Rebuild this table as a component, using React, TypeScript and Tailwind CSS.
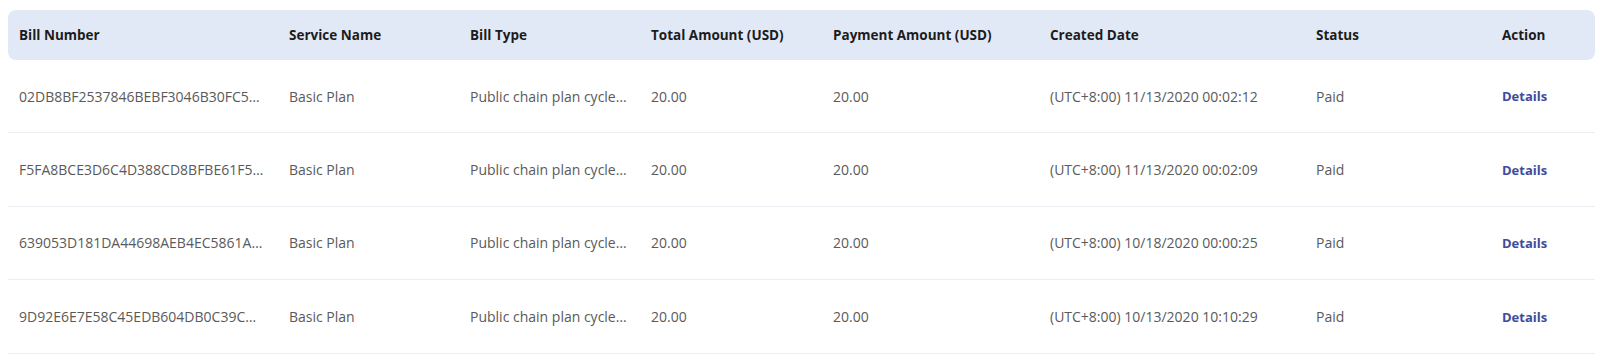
const rows = [
  {
    bill: "02DB8BF2537846BEBF3046B30FC5A9D1",
    date: "(UTC+8:00) 11/13/2020 00:02:12",
  },
  {
    bill: "F5FA8BCE3D6C4D388CD8BFBE61F5A7C2",
    date: "(UTC+8:00) 11/13/2020 00:02:09",
  },
  {
    bill: "639053D181DA44698AEB4EC5861A3F08",
    date: "(UTC+8:00) 10/18/2020 00:00:25",
  },
  {
    bill: "9D92E6E7E58C45EDB604DB0C39CD1E7A",
    date: "(UTC+8:00) 10/13/2020 10:10:29",
  },
];

const cols =
  "grid grid-cols-[270px_181px_181px_182px_217px_266px_186px_1fr] items-center";

const App = () => {
  return (
    <div className="w-full min-h-[359px] bg-white pt-[10px] px-[8px] font-['Open_Sans',sans-serif]">
      {/* Header */}
      <div className={`${cols} h-[50px] bg-[#e2e9f6] rounded-[8px] text-[13.5px] font-bold text-[#1c1c1c]`}>
        {[
          "Bill Number",
          "Service Name",
          "Bill Type",
          "Total Amount (USD)",
          "Payment Amount (USD)",
          "Created Date",
          "Status",
          "Action",
        ].map((h) => (
          <div key={h} className="pl-[11px] whitespace-nowrap">
            {h}
          </div>
        ))}
      </div>

      {/* Rows */}
      {rows.map((r) => (
        <div
          key={r.bill}
          className={`${cols} h-[73.4px] border-b border-[#eceef4] text-[14px] text-[#5a5a5a]`}
        >
          <div className="pl-[11px] pr-[12px] truncate">{r.bill}</div>
          <div className="pl-[11px] truncate">Basic Plan</div>
          <div className="pl-[11px] pr-[10px] truncate">Public chain plan cycle billing</div>
          <div className="pl-[11px]">20.00</div>
          <div className="pl-[11px]">20.00</div>
          <div className="pl-[11px] whitespace-nowrap">{r.date}</div>
          <div className="pl-[11px]">Paid</div>
          <div className="pl-[11px]">
            <a className="text-[13px] font-bold text-[#3f4b9c] cursor-pointer">Details</a>
          </div>
        </div>
      ))}
    </div>
  );
};

export default App;
